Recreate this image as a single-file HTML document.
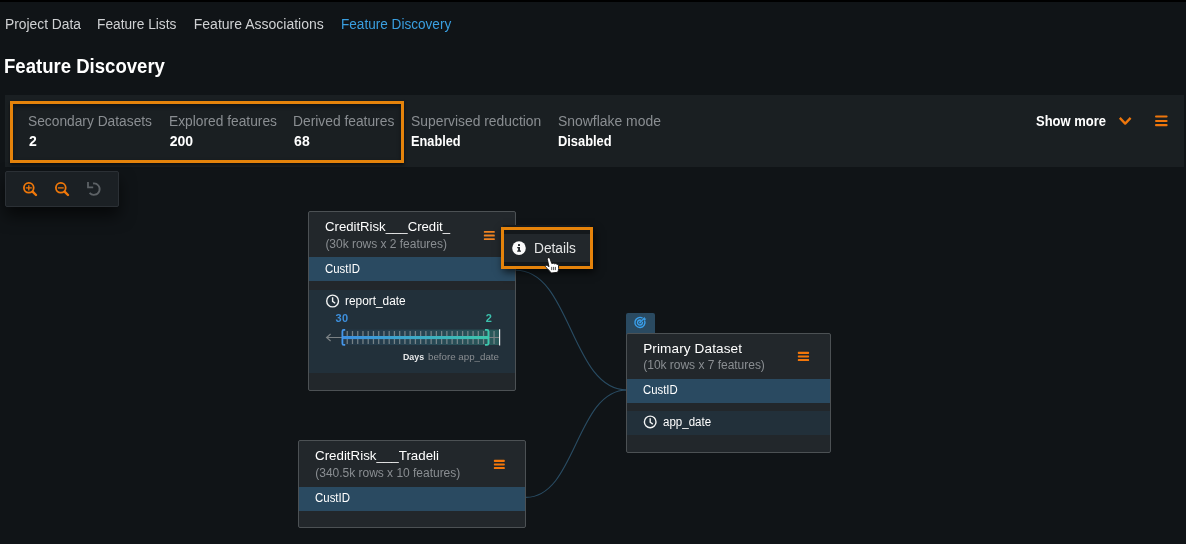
<!DOCTYPE html>
<html>
<head>
<meta charset="utf-8">
<title>Feature Discovery</title>
<style>
html,body{margin:0;padding:0;}
body{width:1186px;height:544px;overflow:hidden;background:#101417;font-family:"Liberation Sans",sans-serif;position:relative;color:#fff;}
.t{position:absolute;white-space:nowrap;line-height:1;transform-origin:0 50%;}
.layer{position:absolute;left:0;top:0;width:1186px;height:544px;will-change:transform;}
.abs{position:absolute;}
.topbar{left:0;top:0;width:1186px;height:2px;background:#000;}
.panel{left:5px;top:95px;width:1179px;height:72px;background:#1a1f22;}
.hl{border:3px solid #e5830b;box-sizing:border-box;}
.toolbar{left:5px;top:171px;width:114px;height:36px;background:#1b2024;border:1px solid #2b3035;box-sizing:border-box;border-radius:2px;box-shadow:0 9px 16px rgba(0,0,0,.6);}
.node{background:#22272b;border:1px solid #4c5154;box-sizing:border-box;border-radius:2px;}
.key{background:#2a4a61;}
.dt{background:#22303a;}
</style>
</head>
<body>
<div class="abs topbar"></div>
<div class="abs panel"></div>
<div class="abs hl" style="left:10px;top:101px;width:394px;height:62px;box-shadow:0 2px 3px rgba(0,0,0,.6), inset 0 2px 4px rgba(0,0,0,.4);"></div>

<!-- show more chevron + hamburger -->
<svg class="abs" style="left:1116px;top:112px" width="56" height="18" viewBox="1116 112 56 18">
<path d="M1119.8 117.9 L1125.2 123.6 L1130.6 117.9" fill="none" stroke="#ee760c" stroke-width="2.3" stroke-linejoin="round"/>
<g fill="#ee760c"><rect x="1155" y="115.4" width="12.6" height="2.1" rx="1"/><rect x="1155" y="119.9" width="12.6" height="2.1" rx="1"/><rect x="1155" y="124.1" width="12.6" height="2.1" rx="1"/></g>
</svg>

<div class="abs toolbar"></div>
<svg class="abs" style="left:5px;top:171px" width="114" height="36" viewBox="5 171 114 36">
<g fill="none" stroke="#f0780a">
<circle cx="28.8" cy="187.8" r="4.9" stroke-width="1.8"/>
<path d="M32.6 191.6 L36 195" stroke-width="2.4" stroke-linecap="round"/>
<path d="M25.8 187.9 H31.8 M28.8 185.2 V190.6" stroke-width="1.3"/>
<circle cx="60.8" cy="187.8" r="4.9" stroke-width="1.8"/>
<path d="M64.6 191.6 L68 195" stroke-width="2.4" stroke-linecap="round"/>
<path d="M57.9 187.9 H63.7" stroke-width="1.3"/>
</g>
<g fill="none" stroke="#5d6266" stroke-width="1.8">
<path d="M93.0 183.5 A5.7 5.7 0 1 1 89.6 192.8"/>
<path d="M88 181.9 V187.4 H93.2"/>
</g>
</svg>

<!-- connectors -->
<svg class="abs" style="left:0;top:0" width="1186" height="544" viewBox="0 0 1186 544">
<path d="M516 270.3 C 571 270.3, 571 390, 627 390" fill="none" stroke="#294c63" stroke-width="1.1"/>
<path d="M526 497.4 C 576 497.4, 576 390, 627 390" fill="none" stroke="#294c63" stroke-width="1.1"/>
</svg>

<!-- node 1 -->
<div class="abs node" style="left:308px;top:211px;width:208px;height:179.5px;"></div>
<div class="abs key" style="left:309px;top:257px;width:206px;height:24.4px;"></div>
<div class="abs dt" style="left:309px;top:289.5px;width:206px;height:83.5px;"></div>

<!-- node 2 -->
<div class="abs key" style="left:626px;top:313px;width:29px;height:22px;border-radius:2px 2px 0 0;"></div>
<div class="abs node" style="left:626px;top:332.5px;width:205px;height:120px;"></div>
<div class="abs key" style="left:627px;top:378.7px;width:203px;height:24.3px;"></div>
<div class="abs dt" style="left:627px;top:410.7px;width:203px;height:24px;"></div>

<!-- node 3 -->
<div class="abs node" style="left:298px;top:440px;width:228px;height:87.7px;"></div>
<div class="abs key" style="left:299px;top:486.5px;width:226px;height:24px;"></div>

<!-- icons inside nodes -->
<svg class="abs" style="left:0;top:0" width="1186" height="544" viewBox="0 0 1186 544">
<defs>
<linearGradient id="g1" x1="0" x2="1" y1="0" y2="0"><stop offset="0" stop-color="#3d8fe2"/><stop offset="1" stop-color="#3cc6ab"/></linearGradient>
<linearGradient id="g2" x1="0" x2="1" y1="0" y2="0"><stop offset="0" stop-color="#3d8fe2" stop-opacity="0.06"/><stop offset="1" stop-color="#3cc6ab" stop-opacity="0.28"/></linearGradient>
</defs>
<!-- hamburgers -->
<g fill="#ee8322">
<rect x="483.85" y="230.9" width="10.95" height="1.9" rx="0.6"/><rect x="483.85" y="234.6" width="10.95" height="1.9" rx="0.6"/><rect x="483.85" y="238.2" width="10.95" height="1.9" rx="0.6"/>
</g>
<g fill="#f4770a">
<rect x="797.8" y="351.85" width="11.3" height="2.05" rx="0.7"/><rect x="797.8" y="355.5" width="11.3" height="2.0" rx="0.7"/><rect x="797.8" y="359.05" width="11.3" height="2.05" rx="0.7"/>
<rect x="493.85" y="459.85" width="10.95" height="2.05" rx="0.7"/><rect x="493.85" y="463.5" width="10.95" height="2.0" rx="0.7"/><rect x="493.85" y="467.05" width="10.95" height="2.05" rx="0.7"/>
</g>
<!-- clocks -->
<g fill="none" stroke="#f2f3f3" stroke-width="1.4">
<circle cx="332.6" cy="301" r="5.9"/><path d="M332.6 297.2 V301.3 L335.2 303.2"/>
<circle cx="650.2" cy="421.9" r="5.8"/><path d="M650.2 418.2 V422.2 L652.8 424.1"/>
</g>
<!-- target icon -->
<g fill="none" stroke="#3aa0ec" stroke-width="1.4">
<path d="M642.6 318.2 A5 5 0 1 0 644.6 320.6"/>
<path d="M641.3 320.4 A2.5 2.5 0 1 0 642.4 321.8"/>
<path d="M640 322.5 L643.5 319" stroke-width="1.1"/>
</g>
<path d="M642.9 318.7 L644.5 316.8 L644.9 318.4 L646.4 318.8 L644.7 320.6 L643.8 320.2 Z" fill="#3aa0ec"/>
<circle cx="640" cy="322.5" r="0.9" fill="#3aa0ec"/>
<!-- slider -->
<rect x="342" y="329.6" width="157" height="15.4" fill="url(#g2)"/>
<path d="M347.24 331 V344 M352.49 331 V344 M357.73 331 V344 M362.97 331 V344 M368.22 331 V344 M373.46 331 V344 M378.70 331 V344 M383.95 331 V344 M389.19 331 V344 M394.43 331 V344 M399.68 331 V344 M404.92 331 V344 M410.16 331 V344 M415.41 331 V344 M420.65 331 V344 M425.89 331 V344 M431.14 331 V344 M436.38 331 V344 M441.62 331 V344 M446.87 331 V344 M452.11 331 V344 M457.35 331 V344 M462.60 331 V344 M467.84 331 V344 M473.08 331 V344 M478.33 331 V344 M483.57 331 V344 M488.81 331 V344 M494.06 331 V344 " stroke="#8a9396" stroke-width="1.25" opacity="0.8"/>
<path d="M499.6 329.2 V345.6" stroke="#e4e7e8" stroke-width="1.2"/>
<path d="M326.5 337.5 H342 M489 337.5 H499" stroke="#7b8184" stroke-width="1.1"/>
<path d="M330.6 334 L326.6 337.5 L330.6 341" fill="none" stroke="#7b8184" stroke-width="1.2"/>
<rect x="342" y="336" width="146.5" height="3.1" fill="url(#g1)"/>
<path d="M345.2 329.9 H343.8 Q342.4 329.9 342.4 331.3 V343.5 Q342.4 344.9 343.8 344.9 H345.2" fill="none" stroke="#4596ea" stroke-width="1.8"/>
<path d="M485 329.9 H487 Q488.4 329.9 488.4 331.3 V343.5 Q488.4 344.9 487 344.9 H485" fill="none" stroke="#3cc8ae" stroke-width="1.8"/>
</svg>

<div class="layer">
<div class="t" style="left:4.86px;top:17.15px;font-size:14px;color:#cfd1d3;transform:scaleX(0.9866);">Project Data</div>
<div class="t" style="left:97.46px;top:17.15px;font-size:14px;color:#cfd1d3;transform:scaleX(0.9811);">Feature Lists</div>
<div class="t" style="left:193.76px;top:17.15px;font-size:14px;color:#cfd1d3;letter-spacing:0.002px;">Feature Associations</div>
<div class="t" style="left:340.96px;top:17.15px;font-size:14px;color:#3a9fe0;transform:scaleX(0.9701);">Feature Discovery</div>
<div class="t" style="left:4.12px;top:57.11px;font-size:19.6px;color:#ffffff;transform:scaleX(0.9473);font-weight:bold;">Feature Discovery</div>
<div class="t" style="left:28.46px;top:114.15px;font-size:14px;color:#8a8e92;transform:scaleX(0.9836);">Secondary Datasets</div>
<div class="t" style="left:169.06px;top:114.15px;font-size:14px;color:#8a8e92;transform:scaleX(0.9842);">Explored features</div>
<div class="t" style="left:293.46px;top:114.15px;font-size:14px;color:#8a8e92;transform:scaleX(0.9862);">Derived features</div>
<div class="t" style="left:411.36px;top:114.15px;font-size:14px;color:#8a8e92;transform:scaleX(0.9907);">Supervised reduction</div>
<div class="t" style="left:558.36px;top:114.15px;font-size:14px;color:#8a8e92;transform:scaleX(0.9941);">Snowflake mode</div>
<div class="t" style="left:28.96px;top:134.15px;font-size:14px;color:#ffffff;font-weight:bold;">2</div>
<div class="t" style="left:169.66px;top:134.15px;font-size:14px;color:#ffffff;letter-spacing:-0.030px;font-weight:bold;">200</div>
<div class="t" style="left:293.96px;top:134.15px;font-size:14px;color:#ffffff;letter-spacing:0.227px;font-weight:bold;">68</div>
<div class="t" style="left:411.36px;top:134.15px;font-size:14px;color:#ffffff;transform:scaleX(0.9108);font-weight:bold;">Enabled</div>
<div class="t" style="left:558.36px;top:134.15px;font-size:14px;color:#ffffff;transform:scaleX(0.9186);font-weight:bold;">Disabled</div>
<div class="t" style="left:1036.26px;top:114.15px;font-size:14px;color:#ffffff;transform:scaleX(0.9277);font-weight:bold;">Show more</div>
<div class="t" style="left:325.29px;top:220.07px;font-size:13.5px;color:#ffffff;transform:scaleX(0.9750);">CreditRisk___Credit_</div>
<div class="t" style="left:325.38px;top:237.84px;font-size:12px;color:#8a8e92;letter-spacing:-0.020px;">(30k rows x 2 features)</div>
<div class="t" style="left:325.38px;top:262.74px;font-size:12px;color:#ffffff;transform:scaleX(0.9516);">CustID</div>
<div class="t" style="left:345.18px;top:294.74px;font-size:12px;color:#ffffff;transform:scaleX(0.9889);">report_date</div>
<div class="t" style="left:335.44px;top:312.59px;font-size:11px;color:#3d8fdc;letter-spacing:0.464px;font-weight:bold;">30</div>
<div class="t" style="left:485.84px;top:312.59px;font-size:11px;color:#3cc0ad;font-weight:bold;">2</div>
<div class="t" style="left:402.71px;top:351.70px;font-size:9.8px;color:#e8e9ea;transform:scaleX(0.9006);font-weight:bold;">Days</div>
<div class="t" style="left:427.61px;top:351.70px;font-size:9.8px;color:#8a8e92;transform:scaleX(0.9946);">before app_date</div>
<div class="t" style="left:643.18px;top:342.09px;font-size:13.6px;color:#ffffff;letter-spacing:0.100px;">Primary Dataset</div>
<div class="t" style="left:643.28px;top:358.84px;font-size:12px;color:#8a8e92;letter-spacing:-0.020px;">(10k rows x 7 features)</div>
<div class="t" style="left:643.28px;top:383.74px;font-size:12px;color:#ffffff;transform:scaleX(0.9462);">CustID</div>
<div class="t" style="left:663.48px;top:415.64px;font-size:12px;color:#ffffff;transform:scaleX(0.9610);">app_date</div>
<div class="t" style="left:315.19px;top:449.17px;font-size:13.5px;color:#ffffff;transform:scaleX(0.9876);">CreditRisk___Tradeli</div>
<div class="t" style="left:315.28px;top:466.64px;font-size:12px;color:#8a8e92;letter-spacing:-0.016px;">(340.5k rows x 10 features)</div>
<div class="t" style="left:315.28px;top:491.94px;font-size:12px;color:#ffffff;transform:scaleX(0.9544);">CustID</div>
</div>

<!-- details popup -->
<div class="abs" style="left:503px;top:225px;width:87px;height:2px;background:#1a1f22;"></div>
<div class="abs" style="left:501px;top:227px;width:92px;height:42px;box-shadow:2px 3px 8px rgba(0,0,0,.7);"></div>
<div class="abs" style="left:503px;top:229px;width:88px;height:38px;background:#14181b;"></div>
<div class="abs" style="left:504px;top:233.5px;width:86px;height:28.5px;background:#22272b;"></div>
<div class="abs hl" style="left:501px;top:227px;width:92px;height:42px;border-width:3.2px;"></div>
<svg class="abs" style="left:510px;top:239px" width="18" height="18" viewBox="510 239 18 18">
<circle cx="519" cy="248.1" r="6.8" fill="#fbfbfb"/>
<rect x="518" y="244" width="2" height="2" rx="0.6" fill="#22272b"/>
<path d="M517.2 247 H520 V250.6 H521 V251.8 H517.2 V250.6 H518.1 V248.2 H517.2 Z" fill="#22272b"/>
</svg>
<div class="layer">
<div class="t" style="left:534.06px;top:241.05px;font-size:14px;color:#e4e5e5;transform:scaleX(0.9791);">Details</div>
</div>
<!-- cursor -->
<svg class="abs" style="left:542px;top:255px" width="20" height="20" viewBox="542 255 20 20">
<path d="M547.6 258.2 C548.2 257.4 549.6 257.5 550 258.6 L551.8 263.6 L553 263.2 C553.6 263 554.2 263.3 554.5 263.8 L555.3 263.6 C555.9 263.5 556.5 263.8 556.7 264.3 L557.2 264.3 C557.9 264.3 558.4 264.8 558.5 265.5 L558.6 268.5 C558.6 270 558.2 271 557.6 272.3 L551.3 273 C550 271.5 548 269 545.6 266.9 C545 266.3 545.3 265.3 546.2 265.3 C547.2 265.3 548.2 266 549 266.7 L547.4 259.6 C547.3 259 547.3 258.6 547.6 258.2 Z" fill="#ffffff" stroke="#111" stroke-width="0.9" stroke-linejoin="round"/>
<path d="M551.7 266.9 V270.1 M553.6 266.9 V270.1 M555.4 266.9 V270.1" stroke="#222" stroke-width="0.8"/>
</svg>
</body>
</html>
